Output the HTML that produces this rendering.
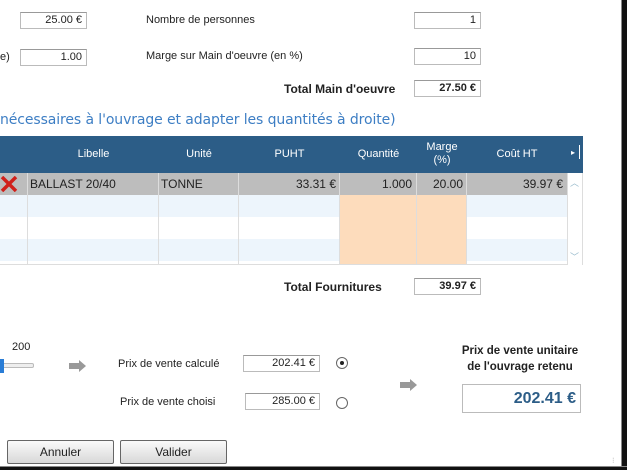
<!DOCTYPE html>
<html><head><meta charset="utf-8"><style>
*{margin:0;padding:0;box-sizing:border-box}
body{width:627px;height:470px;background:#fff;position:relative;overflow:hidden;font-family:"Liberation Sans",Arial,sans-serif;font-size:11px;color:#222}
.a{position:absolute}
.in{position:absolute;border:1px solid #bbb;border-top-color:#999;background:#fff;text-align:right;padding-right:4px;font-size:11px;line-height:15px;height:17px}
.b{font-weight:bold}
.hd{position:absolute;top:136px;height:37px;background:#2c5d87;color:#fff;text-align:center;line-height:37px}
.btn{position:absolute;top:440px;height:24px;border:1px solid #666;border-radius:2px;background:linear-gradient(#fafafa,#d8d8d8);text-align:center;line-height:22px;font-size:12px}
</style></head><body>
<div class="in" style="left:20px;top:12px;width:67px">25.00 €</div>
<div class="a" style="left:146px;top:14px">Nombre de personnes</div>
<div class="in" style="left:414px;top:12px;width:67px">1</div>
<div class="a" style="left:0;top:51px">e)</div>
<div class="in" style="left:20px;top:49px;width:67px">1.00</div>
<div class="a" style="left:146px;top:50px">Marge sur Main d'oeuvre (en %)</div>
<div class="in" style="left:414px;top:48px;width:67px">10</div>
<div class="a b" style="left:284px;top:82px;font-size:12px">Total Main d'oeuvre</div>
<div class="in b" style="left:414px;top:80px;width:67px">27.50 €</div>
<div class="a" style="left:0;top:112px;font-family:'DejaVu Sans',sans-serif;font-size:14px;letter-spacing:-0.1px;color:#3d7ec4">nécessaires à l'ouvrage et adapter les quantités à droite)</div>

<div class="hd" style="left:0;width:583px"></div>
<div class="hd" style="left:28px;width:131px">Libelle</div>
<div class="hd" style="left:159px;width:80px">Unité</div>
<div class="hd" style="left:239px;width:101px">PUHT</div>
<div class="hd" style="left:340px;width:77px">Quantité</div>
<div class="hd" style="left:417px;width:50px;line-height:13px;padding-top:5px">Marge<br>(%)</div>
<div class="hd" style="left:467px;width:100px">Coût HT</div>
<div class="a" style="left:571px;top:148px;color:#fff;font-size:8px">▸</div>
<div class="a" style="left:579px;top:145px;width:1px;height:14px;background:#fff"></div>

<div class="a" style="left:0;top:173px;width:567px;height:22px;background:#bdbdbd"></div>
<div class="a" style="left:0;top:195px;width:567px;height:22px;background:#edf5fc"></div>
<div class="a" style="left:0;top:239px;width:567px;height:22px;background:#edf5fc"></div>
<div class="a" style="left:340px;top:195px;width:127px;height:70px;background:#fddcbc"></div>
<div class="a" style="left:0;top:264px;width:583px;height:1px;background:#ddd"></div>
<div class="a" style="left:27px;top:173px;width:1px;height:92px;background:#ddd"></div>
<div class="a" style="left:158px;top:173px;width:1px;height:92px;background:#ddd"></div>
<div class="a" style="left:238px;top:173px;width:1px;height:92px;background:#ddd"></div>
<div class="a" style="left:339px;top:173px;width:1px;height:92px;background:#ddd"></div>
<div class="a" style="left:416px;top:173px;width:1px;height:92px;background:#ddd"></div>
<div class="a" style="left:466px;top:173px;width:1px;height:92px;background:#ddd"></div>
<div class="a" style="left:567px;top:173px;width:16px;height:92px;background:#fff;border-left:1px solid #ddd;border-right:1px solid #ddd"></div>
<div class="a" style="left:570px;top:176px;color:#9bc;font-size:9px">︿</div>
<div class="a" style="left:570px;top:250px;color:#9bc;font-size:9px">﹀</div>
<svg class="a" style="left:0;top:176px" width="18" height="16"><path d="M2 1L16 15M16 1L2 15" stroke="#d0201a" stroke-width="3.5"/></svg>
<div class="a" style="left:30px;top:173px;line-height:22px;font-size:12px">BALLAST 20/40</div>
<div class="a" style="left:161px;top:173px;line-height:22px;font-size:12px">TONNE</div>
<div class="a" style="left:239px;width:97px;text-align:right;top:173px;line-height:22px;font-size:12px">33.31 €</div>
<div class="a" style="left:340px;width:72px;text-align:right;top:173px;line-height:22px;font-size:12px">1.000</div>
<div class="a" style="left:417px;width:46px;text-align:right;top:173px;line-height:22px;font-size:12px">20.00</div>
<div class="a" style="left:467px;width:96px;text-align:right;top:173px;line-height:22px;font-size:12px">39.97 €</div>

<div class="a b" style="left:284px;top:280px;font-size:12px">Total Fournitures</div>
<div class="in b" style="left:414px;top:278px;width:67px">39.97 €</div>

<div class="a" style="left:12px;top:341px">200</div>
<div class="a" style="left:0;top:363px;width:34px;height:5px;border:1px solid #bbb;background:#eee;border-radius:2px"></div>
<div class="a" style="left:0;top:359px;width:4px;height:14px;background:#2a7dd6"></div>
<svg class="a" style="left:69px;top:360px" width="18" height="12"><path d="M0 3H10V0L17 6L10 12V9H0Z" fill="#999"/></svg>
<div class="a" style="left:118px;top:358px">Prix de vente calculé</div>
<div class="in" style="left:243px;top:355px;width:77px">202.41 €</div>
<svg class="a" style="left:335px;top:356px" width="14" height="14"><circle cx="7" cy="7" r="5.5" fill="#fff" stroke="#666"/><circle cx="7" cy="7" r="2" fill="#222"/></svg>
<div class="a" style="left:120px;top:396px">Prix de vente choisi</div>
<div class="in" style="left:245px;top:393px;width:75px">285.00 €</div>
<svg class="a" style="left:335px;top:396px" width="14" height="14"><circle cx="7" cy="7" r="5.5" fill="#fff" stroke="#666"/></svg>
<svg class="a" style="left:400px;top:379px" width="18" height="12"><path d="M0 3H10V0L17 6L10 12V9H0Z" fill="#999"/></svg>
<div class="a b" style="left:450px;top:343px;width:140px;text-align:center;line-height:16px;font-size:11.5px">Prix de vente unitaire<br>de l'ouvrage retenu</div>
<div class="a b" style="left:462px;top:384px;width:119px;height:29px;border:1px solid #bbb;text-align:right;padding-right:4px;line-height:27px;font-size:16px;color:#2c5d87">202.41 €</div>
<div class="btn" style="left:7px;width:107px">Annuler</div>
<div class="btn" style="left:120px;width:107px">Valider</div>
<div class="a" style="left:612px;top:456px;color:#bbb;font-size:8px">⁝</div>
<div class="a" style="left:621px;top:0;width:6px;height:470px;background:#111;border-left:1px solid #888"></div>
<div class="a" style="left:0;top:466px;width:627px;height:4px;background:#111;border-top:1px solid #888"></div>
</body></html>
